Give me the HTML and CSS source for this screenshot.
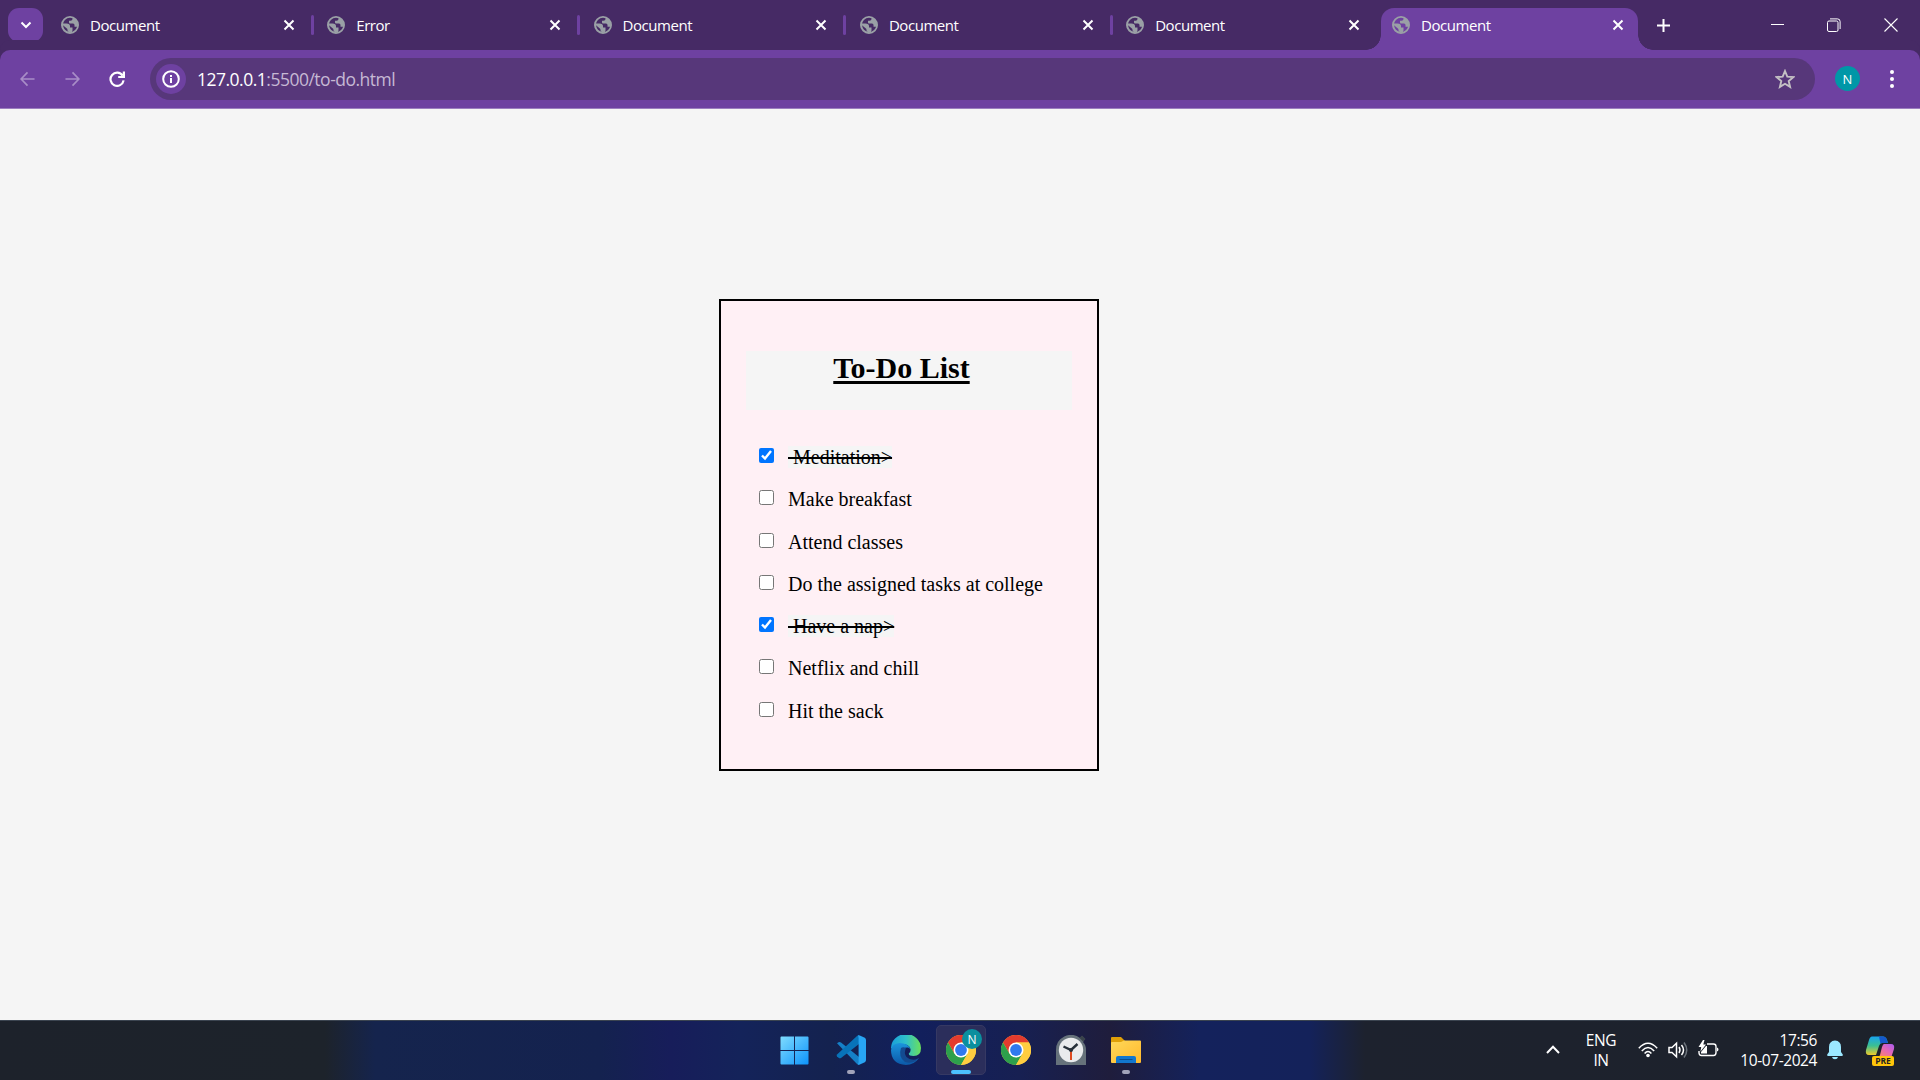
FILE: index.html
```html
<!DOCTYPE html>
<html lang="en">
<head>
<meta charset="utf-8">
<title>Document</title>
<link rel="stylesheet" href="styles.css">
</head>
<body>
<svg width="0" height="0" class="defs" aria-hidden="true">
  <defs>
    <symbol id="globe" viewBox="0 0 18 18"><circle cx="9" cy="9" r="8.100" fill="none" stroke="#9aa0a6" stroke-width="1.800"/><path d="M1 7.500H5.500Q9 7.500 9 10V11.500H11.500V14.500Q11.500 16 9 17A8 8 0 0 1 1 7.500Z" fill="#9aa0a6" class="land"/><path d="M11.500 1.500V3Q11.500 4.800 9.500 4.800H8V6.500Q8 7.500 9 7.500H12Q13.500 7.500 13.500 9V10.800H16.800A8 8 0 0 0 11.500 1.500Z" fill="#9aa0a6"/><path d="M2 9.200L6.400 13V14Q6.400 15.300 8 15.700Q3 15 2 9.200Z" class="globe-sea"/></symbol>
    <symbol id="close" viewBox="0 0 12 12"><path d="M1.500 1.500l9 9M10.500 1.500l-9 9" stroke="#fff" stroke-width="2" fill="none"/></symbol>
    <symbol id="chrome" viewBox="0 0 30 30"><circle cx="15" cy="15" r="15" fill="#ffcd40"/><path d="M2 7.500A15 15 0 0 1 28 7.500H15L8.500 18.800Z" fill="#e33b2e"/><path d="M2 7.500A15 15 0 0 0 15 30L21.500 18.800H15L8.500 18.800Z" fill="#2da04c"/><path d="M28 7.500A15 15 0 0 1 15 30L21.500 18.800L15 7.500Z" fill="#ffcd40"/><circle cx="15" cy="15" r="7.500" fill="#fff"/><circle cx="15" cy="15" r="5.900" fill="#3079ee"/></symbol>
  </defs>
</svg>
<div class="screen">
  <header class="tabs">
    <button class="search-tabs"><svg width="12" height="8" viewBox="0 0 12 8"><path d="M1.500 1.500L6 6l4.500-4.500" fill="none" stroke="#fff" stroke-width="2"/></svg></button>
    <div class="tab"><svg class="fav"><use href="#globe"/></svg><span class="name">Document</span><svg class="x"><use href="#close"/></svg></div>
    <div class="tab"><svg class="fav"><use href="#globe"/></svg><span class="name">Error</span><svg class="x"><use href="#close"/></svg></div>
    <div class="tab"><svg class="fav"><use href="#globe"/></svg><span class="name">Document</span><svg class="x"><use href="#close"/></svg></div>
    <div class="tab"><svg class="fav"><use href="#globe"/></svg><span class="name">Document</span><svg class="x"><use href="#close"/></svg></div>
    <div class="tab last"><svg class="fav"><use href="#globe"/></svg><span class="name">Document</span><svg class="x"><use href="#close"/></svg></div>
    <div class="tab active"><svg class="fav"><use href="#globe"/></svg><span class="name">Document</span><svg class="x"><use href="#close"/></svg></div>
    <svg class="plus" width="13" height="13" viewBox="0 0 13 13"><path d="M6.500 0v13M0 6.500h13" stroke="#fff" stroke-width="2"/></svg>
    <div class="window-buttons">
      <svg width="13" height="13" viewBox="0 0 13 13"><path d="M0 6.500h13" stroke="#fff"/></svg>
      <svg width="14" height="14" viewBox="0 0 14 14" fill="none" stroke="#fff"><rect x=".5" y="3" width="10.500" height="10.500" rx="1.500"/><path d="M3 .9h7.500a2.600 2.600 0 0 1 2.600 2.600V11"/></svg>
      <svg width="14" height="14" viewBox="0 0 14 14"><path d="M.5.5l13 13M13.500.5l-13 13" stroke="#fff" stroke-width="1.100"/></svg>
    </div>
  </header>
  <nav class="toolbar">
    <svg class="nav dim" viewBox="0 0 16 16"><path d="M15.500 8H1.500M8 1L1.200 8L8 15"/></svg>
    <svg class="nav dim" viewBox="0 0 16 16"><path d="M.5 8h14M8 1l6.800 7L8 15"/></svg>
    <svg class="nav reload" viewBox="0 0 16 16"><path d="M13.600 4.600A6.600 6.600 0 1 0 14.600 9.400M14.900 0.500V6H9.200"/></svg>
    <div class="address">
      <span class="info"><svg width="18" height="18" viewBox="0 0 18 18"><circle cx="9" cy="9" r="7.800" fill="none" stroke="#fff" stroke-width="2"/><path d="M9 8v5M9 5v2" stroke="#fff" stroke-width="2"/></svg></span>
      <span class="url"><b>127.0.0.1</b>:5500/to-do.html</span>
      <svg class="star" width="20" height="20" viewBox="0 0 20 20"><path d="M10 2l2.300 5.600 6 .5-4.600 3.900 1.400 5.900L10 14.800l-5.100 3.100 1.400-5.900L1.700 8.100l6-.5z" fill="none" stroke="#c4c0c4" stroke-width="1.900"/></svg>
    </div>
    <span class="avatar">N</span>
    <svg class="menu" width="4" height="20" viewBox="0 0 4 20" fill="#fff"><circle cx="2" cy="3" r="2"/><circle cx="2" cy="10" r="2"/><circle cx="2" cy="17" r="2"/></svg>
  </nav>
  <main class="page">
    <section class="card">
      <h1><span>To-Do List</span></h1>
      <ul>
        <li><input type="checkbox" checked><span class="done">&nbsp;Meditation&gt;</span></li>
        <li><input type="checkbox"><span>Make breakfast</span></li>
        <li><input type="checkbox"><span>Attend classes</span></li>
        <li><input type="checkbox"><span>Do the assigned tasks at college</span></li>
        <li><input type="checkbox" checked><span class="done">&nbsp;Have a nap&gt;</span></li>
        <li><input type="checkbox"><span>Netflix and chill</span></li>
        <li><input type="checkbox"><span>Hit the sack</span></li>
      </ul>
    </section>
  </main>
  <footer class="taskbar">
    <div class="apps">
      <div class="app"><svg viewBox="0 0 30 30"><defs><linearGradient id="win" x2="1" y2="1" gradientUnits="objectBoundingBox"><stop stop-color="#7fdcff"/><stop offset="1" stop-color="#0d93fb"/></linearGradient></defs><path d="M1.500.5H14.500V14.500H.5V1.500a1 1 0 0 1 1-1ZM15.500.5H28.500a1 1 0 0 1 1 1V14.500H15.500ZM.5 15.500H14.500V29.500H1.500a1 1 0 0 1-1-1ZM15.500 15.500H29.500V28.500a1 1 0 0 1-1 1H15.500Z" fill="url(#win)"/></svg></div>
      <div class="app"><svg viewBox="0 0 30 30"><path d="M1 8.200L3 7Q4 6.800 5 7.500L23 22V29.500L21 29Z" fill="#1580c8"/><path d="M1 21.500L3.200 23.200Q4 23.500 5 23L23 9V.5L21 1L1 19.500Q.2 20.500 1 21.500Z" fill="#0873b9"/><path d="M21.500.6Q22.500-.1 23.800.4L28.800 2.800Q30 3.500 30 5V25Q30 26.500 28.800 27.200L23.800 29.600Q22.500 30.100 21.500 29.200Q22.600 29 22.600 27V3Q22.600 1 21.500.6Z" fill="#28a5f3"/></svg><i class="dot"></i></div>
      <div class="app"><svg viewBox="0 0 30 30"><defs><linearGradient id="e1" x1="0" y1=".5" x2="1" y2=".5"><stop stop-color="#199fdb"/><stop offset=".5" stop-color="#2fc1c9"/><stop offset="1" stop-color="#6be05b"/></linearGradient><linearGradient id="e2" x1="0" y1="0" x2="0" y2="1"><stop stop-color="#1b95dc"/><stop offset="1" stop-color="#0c58a8"/></linearGradient></defs><path d="M0 14A15 14.500 0 0 1 30 13Q30 21 22.500 21Q17.500 21 17.800 18.500Q20 17 19.500 14Q18 9 11 9Q4 9 0 14Z" fill="url(#e1)"/><path d="M0 15Q1 8.500 8.500 8Q17 8 19.500 14L17 12.500Q12 12 11 17Q10.500 22 15 25Q21 28 28 23Q23 30 15 30Q0 29 0 15Z" fill="url(#e2)"/><path d="M10 13Q7 22 14 27Q21 29.500 28 23.500Q20 26.500 15.500 22Q12.500 18 15 13Q12 11.500 10 13Z" fill="#134b91"/></svg></div>
      <div class="app current"><svg><use href="#chrome"/></svg><span class="badge">N</span><i class="dot"></i></div>
      <div class="app"><svg><use href="#chrome"/></svg></div>
      <div class="app"><svg viewBox="0 0 30 30"><path d="M0 15A15 15 0 0 1 24 3L26 1L29 4L27 7Q30 10 30 15V30H0Z" fill="#66727b"/><path d="M23.500 3L26 .5L29.500 4L27 6.500Z" fill="#39434b"/><circle cx="15" cy="15" r="12.200" fill="#e9ebed"/><path d="M7.500 11.500L15 15L21.500 9" fill="none" stroke="#26303a" stroke-width="2.400"/><path d="M15 15V25" stroke="#dd4a20" stroke-width="2"/><circle cx="15" cy="15" r="2" fill="#26303a"/></svg></div>
      <div class="app"><svg viewBox="0 0 30 30"><defs><linearGradient id="fo" x2="1" y2="1"><stop stop-color="#ffd85a"/><stop offset="1" stop-color="#ffb92c"/></linearGradient></defs><path d="M0 3Q0 2 1 2H10L13.500 5.500V12H0Z" fill="#e0a008"/><path d="M0 7.500Q0 7 1 7H10L13 5.500H29Q30 5.500 30 6.500V27Q30 28 29 28H1Q0 28 0 27Z" fill="url(#fo)"/><path d="M5 28V23Q5 21 7 21H23Q25 21 25 23V28Z" fill="#1277cf"/><path d="M8.500 24.500H21.500" stroke="#0a4f91" stroke-width="1"/></svg><i class="dot"></i></div>
    </div>
    <div class="tray">
      <svg class="up" width="14" height="9" viewBox="0 0 14 9"><path d="M1 8l6-6.200L13 8" fill="none" stroke="#fff" stroke-width="2"/></svg>
      <div class="lang">ENG<br>IN</div>
      <svg class="wifi" width="20" height="16" viewBox="0 0 20 16" fill="none" stroke="#fff" stroke-width="1.500"><path d="M.8 6.200Q10-3.600 19.200 6.200M3.800 9Q10 2.200 16.200 9M6.600 11.600Q10 7.600 13.400 11.600"/><circle cx="10" cy="13.500" r="1.800" fill="#fff" stroke="none"/></svg>
      <svg class="sound" width="21" height="18" viewBox="0 0 21 18" fill="none" stroke="#fff" stroke-width="1.500"><path d="M1 6.500h3L8.500 2.300v13.400L4 11.500H1Z"/><path d="M11 6q2 3 0 6M13.500 4q4 5 0 10"/><path d="M16 1.500q5.500 7.500 0 15" stroke="#6c737b"/></svg>
      <svg class="battery" width="21" height="18" viewBox="0 0 21 18"><path d="M9 4h6.500Q18 4 18 6.500v6Q18 15.500 15.500 15.500H3.500Q1 15.500 1 12.500V11" fill="none" stroke="#fff" stroke-width="1.400"/><path d="M9 6v7.500H3V12L8 6ZM19 7.500Q20.500 8 20.500 9.500T19 11.500Z" fill="#fff"/><path d="M5 0L.5 7h2.700L2.500 11.500L8 4.500H5.300L6.500 0Z" fill="#fff"/></svg>
      <div class="clock">17:56<br>10-07-2024</div>
      <svg class="bell" width="16" height="20" viewBox="0 0 16 20" fill="#9be8ff"><path d="M8 .5Q14 1 14 7V12L15.800 14.500Q16 16 15 16H1Q0 16 .2 14.500L2 12V7Q2 1 8 .5ZM5 17H11Q10.500 19.300 8 19.300T5 17Z"/></svg>
      <div class="copilot"><svg width="30" height="28" viewBox="0 0 30 28"><defs><linearGradient id="c1" x1="0" x2="0" y1="0" y2="1"><stop stop-color="#18a5ef"/><stop offset=".5" stop-color="#3bbf92"/><stop offset="1" stop-color="#efcb2a"/></linearGradient><linearGradient id="c2" x1="1" y1="0" x2=".2" y2="1"><stop stop-color="#a95cf2"/><stop offset=".5" stop-color="#e667b4"/><stop offset="1" stop-color="#fb8860"/></linearGradient></defs><path d="M7 .5H18Q21 .5 22 4L23 7H17Q15 7 14 10L11 19H4Q0 19 1 14L4 4Q5 .5 7 .5Z" fill="url(#c1)"/><path d="M14 .5H18Q21 .5 22 4L23 7H17Q16 7 15.500 8Z" fill="#1459cc"/><path d="M19 8H26Q30 8 29 13L26 22H12Q14 22 15 19L17 11Q18 8 19 8Z" fill="url(#c2)"/></svg><b>PRE</b></div>
    </div>
  </footer>
</div>
</body>
</html>
```
FILE: styles.css
```css
* { box-sizing: border-box; }
body { margin: 0; overflow: hidden; font-family: "Open Sans", "Noto Sans", sans-serif; color: #fff; }
svg { display: block; flex: none; }
.defs { position: absolute; }
.screen { width: 1920px; height: 1080px; display: flex; flex-direction: column; }

/* tab strip */
.tabs { height: 50px; flex: none; background: #462a65; display: flex; align-items: stretch; padding-left: 8px; }
.search-tabs { width: 35px; height: 34px; margin: 8px 3px 0 0; padding: 0; border: 0; border-radius: 11px; background: #6e41a1; display: grid; place-items: center; }
.tab { width: 266.3px; flex: none; display: flex; align-items: center; padding: 0 17.500px 0 15px; position: relative; --sea: #462a65; }
.tab::after { content: ""; position: absolute; right: -1.500px; top: 15px; width: 3px; height: 20px; border-radius: 2px; background: #6e41a1; }
.tab.last::after { display: none; }
.fav { width: 18px; height: 18px; margin-right: 11px; }
.globe-sea { fill: var(--sea); }
.name { flex: 1; font-size: 15px; letter-spacing: -.45px; }
.x { width: 12px; height: 12px; }
.tab.active { width: 257.500px; margin: 7.500px 0 0 3.500px; padding: 0 14px 7.500px 11px; background: #6e41a1; border-radius: 13px 13px 0 0; --sea: #6e41a1; }
.tab.active::before, .tab.active::after { content: ""; position: absolute; top: auto; bottom: 0; width: 15px; height: 15px; border-radius: 0; }
.tab.active::before { left: -15px; background: radial-gradient(circle at 0 0, transparent 14.500px, #6e41a1 15px); }
.tab.active::after { right: -15px; background: radial-gradient(circle at 100% 0, transparent 14.500px, #6e41a1 15px); }
.plus { margin: 19px 0 0 18.500px; }
.window-buttons { margin-left: auto; padding: 0 22px 1px 0; display: flex; align-items: center; gap: 43px; }

/* toolbar */
.toolbar { height: 59px; flex: none; background: #6e41a1; border-bottom: 1px solid #9c7ebf; border-radius: 10px 10px 0 0; box-shadow: 0 -10px 0 #462a65; display: flex; align-items: center; padding: 0 26px 0 20px; }
.nav { width: 15px; height: 16px; margin-right: 30px; fill: none; stroke: #fff; stroke-width: 1.800; }
.dim { stroke: #a88dc7; }
.reload { stroke-width: 2.200; width: 16px; margin-right: 25px; margin-left: -1px; }
.address { width: 1665px; height: 42px; border-radius: 21px; background: #57377a; display: flex; align-items: center; padding: 0 20px 0 6px; }
.info { width: 30px; height: 30px; border-radius: 50%; background: #6e41a1; display: grid; place-items: center; margin-right: 11px; }
.url { flex: 1; font-size: 17.500px; letter-spacing: -.5px; color: #c6b9d4; }
.url b { font-weight: 400; color: #fff; }
.avatar { width: 25px; height: 25px; margin: -1px 0 0 20px; border-radius: 50%; background: #0097a7; display: grid; place-items: center; font-size: 13px; }
.menu { margin-left: auto; }

/* to-do page */
.page { flex: 1; background: #f5f5f5; color: #000; padding: 190px 0 0 719px; font-family: "Liberation Serif", "Times New Roman", serif; }
.card { width: 380px; height: 472px; border: 2px solid #000; background: #fff0f5; padding: 50px 25px 0; }
h1 { margin: 0; height: 59px; background: #f5f5f5; text-align: center; font-size: 30px; line-height: 34px; padding-right: 15px; }
h1 span { text-decoration: underline 3px; text-underline-offset: 3px; }
ul { list-style: none; margin: 36px 0 0; padding: 0 0 0 13px; }
li { height: 42.300px; display: flex; align-items: flex-start; font-size: 20px; line-height: 22px; }
input { appearance: auto; width: 15px; height: 15px; margin: 2px 14px 0 0; flex: none; }
li span { white-space: nowrap; }
.done { background: #f5f5f5; text-decoration: line-through 2px; }

/* taskbar */
.taskbar { height: 60px; flex: none; border-top: 1px solid #3b4450; background: linear-gradient(90deg, #1d222b 0, #1d232b 325px, #15244d 375px, #14224f 600px, #171d5a 670px, #14235a 740px, #14224f 830px, #121f5c 920px, #172052 1020px, #1f1d3c 1110px, #14225c 1200px, #14225a 1310px, #1d222e 1365px, #1d222b 100%); display: flex; justify-content: space-between; padding: 4px 25px 0 769px; }
.apps { display: flex; gap: 5px; }
.app { width: 50px; height: 50px; display: grid; place-items: center; position: relative; border-radius: 5px; }
.app svg { width: 30px; height: 30px; }
.app:first-child { margin-right: 2px; }
.app:first-child svg { width: 29px; height: 29px; }
.current { background: #2b2e5b; border: 1px solid #363963; }
.dot { position: absolute; left: 21px; bottom: 1px; width: 8px; height: 4px; border-radius: 2px; background: #a1a3ba; }
.current .dot { left: 14px; bottom: 0; width: 20px; background: #4cc2ff; }
.badge { position: absolute; right: 3px; top: 3px; width: 20px; height: 20px; border-radius: 50%; background: #0b8f9e; display: grid; place-items: center; font-size: 12px; }
.tray { display: flex; height: 50px; align-items: center; font-size: 15.500px; line-height: 20px; }
.up { margin-top: -1px; }
.lang { width: 50px; margin: -1px 12px 0 16px; text-align: center; letter-spacing: -.4px; }
.sound { margin-left: 10px; }
.battery { margin-left: 9px; margin-top: -3px; }
.clock { width: 98px; margin-top: -1px; text-align: right; letter-spacing: -.42px; }
.bell { margin-left: 10px; }
.copilot { margin-left: 22px; position: relative; }
.copilot b { position: absolute; left: 7px; top: 20px; width: 22px; height: 10px; border-radius: 2px; background: #ffc50a; color: #222; font-size: 8.500px; line-height: 10px; text-align: center; }
```
